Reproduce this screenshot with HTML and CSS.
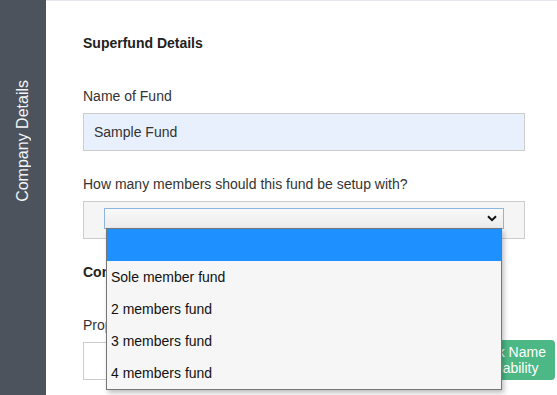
FILE: index.html
```html
<!DOCTYPE html>
<html>
<head>
    <title>Company Details</title>
    <link rel="stylesheet" href="styles.css">
</head>
<body>
    <div class="layout">
        <aside class="sidebar">
            <span class="sidebar-title">Company Details</span>
        </aside>

        <main class="content">
            <h4 class="section-title">Superfund Details</h4>

            <div class="field">
                <label class="field-label">Name of Fund</label>
                <input class="text-input filled" type="text" value="Sample Fund">
            </div>

            <div class="field">
                <label class="field-label">How many members should this fund be setup with?</label>
                <div class="select-box">
                    <div class="select-control">
                        <svg class="chevron" width="10" height="7" viewBox="0 0 10 7">
                            <path d="M1 1.2 L5 5.2 L9 1.2" fill="none" stroke="#111" stroke-width="2"/>
                        </svg>

                        <!-- open dropdown list -->
                        <div class="select-menu">
                            <div class="option active"></div>
                            <div class="option">Sole member fund</div>
                            <div class="option">2 members fund</div>
                            <div class="option">3 members fund</div>
                            <div class="option">4 members fund</div>
                        </div>
                    </div>
                </div>
            </div>

            <h4 class="section-title">Company Name</h4>

            <div class="field">
                <label class="field-label">Proposed Company Name</label>
                <div class="name-row">
                    <input class="text-input" type="text">
                    <button class="check-btn">Check Name Availability</button>
                </div>
            </div>
        </main>
    </div>
</body>
</html>
```

FILE: styles.css
```css
body {
    margin: 0;
    font-family: "Liberation Sans", Arial, sans-serif;
    background-color: #fff;
    overflow: hidden;
}

.layout {
    display: flex;
    min-height: 395px;
}

.sidebar {
    width: 46px;
    flex-shrink: 0;
    background-color: #4c535d;
    display: flex;
    justify-content: center;
    align-items: flex-start;
    padding-top: 80px;
    box-sizing: border-box;
}

.sidebar-title {
    writing-mode: vertical-rl;
    transform: rotate(180deg);
    color: #f3f4f5;
    font-size: 16px;
    line-height: 18px;
    white-space: nowrap;
}

.content {
    flex: 1;
    border-top: 1px solid #e4e7ee;
    padding: 34px 32px 0 37px;
}

.section-title {
    margin: 0 0 37px;
    font-size: 14px;
    line-height: 16px;
    font-weight: bold;
    color: #222;
}

.field {
    margin-bottom: 25px;
}

.field-label {
    display: block;
    margin-bottom: 9px;
    font-size: 14px;
    line-height: 16px;
    color: #333;
}

.text-input {
    display: block;
    width: 100%;
    height: 38px;
    box-sizing: border-box;
    border: 1px solid #ccc;
    padding: 0 10px;
    font-family: inherit;
    font-size: 14px;
    color: #333;
    background-color: #fff;
    outline: none;
}

.text-input.filled {
    background-color: #e8f0fe;
}

.select-box {
    height: 38px;
    box-sizing: border-box;
    border: 1px solid #ccc;
    background-color: #f5f5f5;
    padding: 6px 20px;
}

.select-control {
    position: relative;
    height: 21px;
    box-sizing: border-box;
    border: 1px solid #8db5e2;
    background: linear-gradient(#f9f9f9, #ececec);
    display: flex;
    justify-content: flex-end;
    align-items: center;
    padding-right: 6px;
}

.select-menu {
    position: absolute;
    left: 1px;
    top: 19px;
    width: 396px;
    box-sizing: border-box;
    border: 1px solid #767676;
    background-color: #f6f6f6;
    box-shadow: 2px 3px 5px rgba(0, 0, 0, 0.25);
    z-index: 10;
}

.option {
    height: 32px;
    line-height: 33px;
    padding-left: 4px;
    font-size: 14px;
    color: #111;
}

.option.active {
    background-color: #1e90ff;
}

.name-row {
    display: flex;
    align-items: flex-end;
    gap: 8px;
    margin-top: -2px;
    margin-right: -30px;
}

.name-row .text-input {
    flex: 1;
}

.check-btn {
    width: 99px;
    height: 40px;
    flex-shrink: 0;
    padding: 0 6px;
    border: none;
    border-radius: 4px;
    background-color: #4cb885;
    color: #fff;
    font-family: inherit;
    font-size: 14px;
    line-height: 16px;
}
```
